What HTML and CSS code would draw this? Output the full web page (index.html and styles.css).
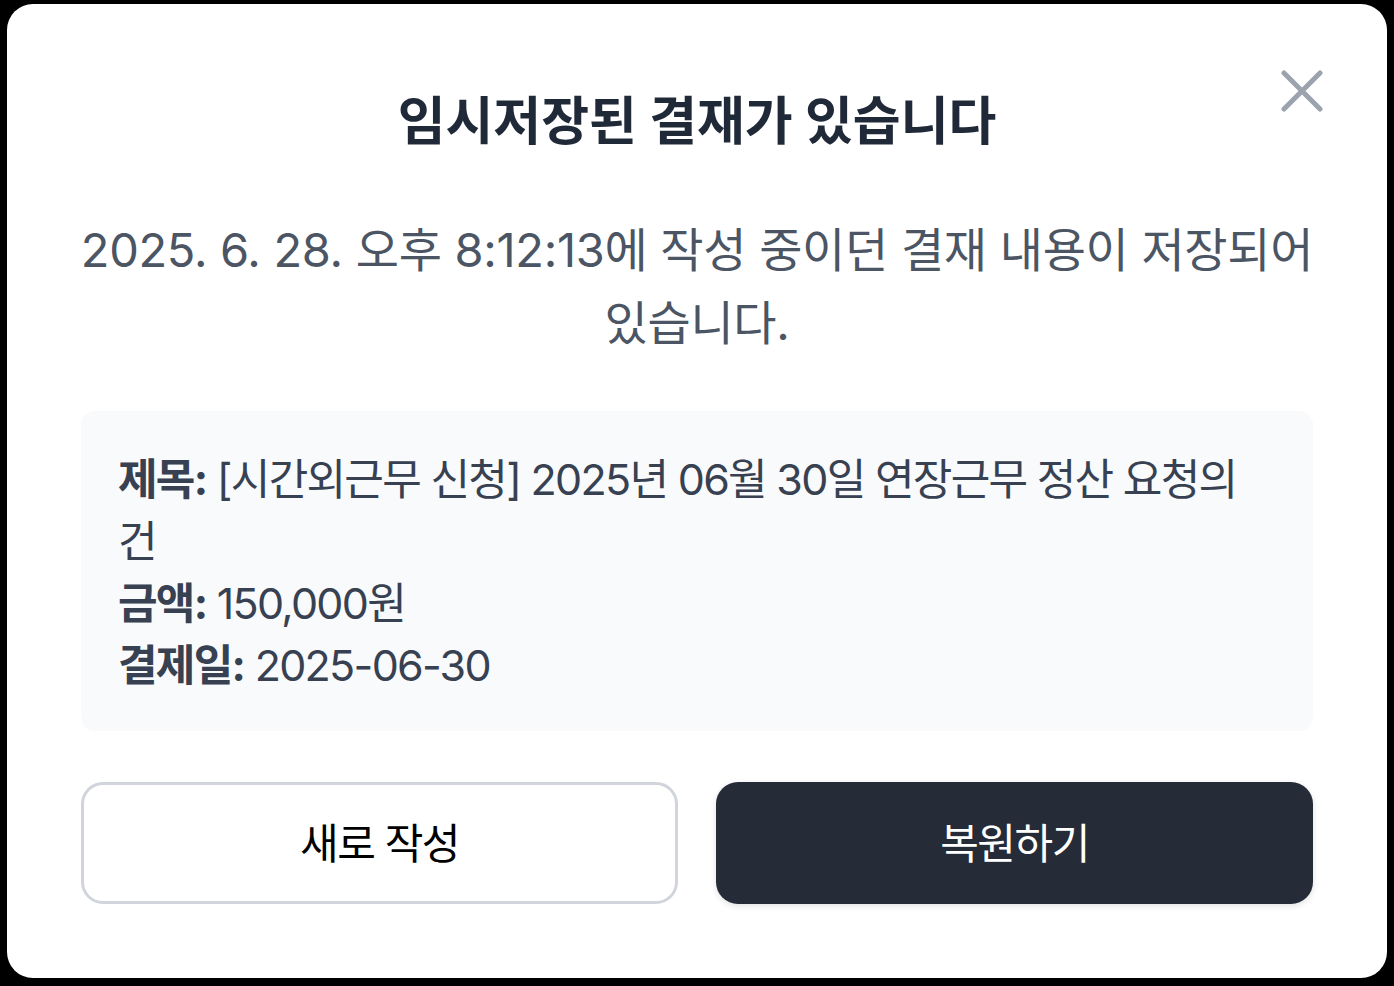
FILE: index.html
```html
<!DOCTYPE html>
<html lang="ko">
<head>
<meta charset="utf-8">
<title>임시저장된 결재</title>
<link rel="stylesheet" href="styles.css">
</head>
<body>
<div class="modal">
  <button class="close" aria-label="닫기">
    <svg width="42" height="42" viewBox="0 0 42 42" fill="none" stroke="#9ca3af" stroke-width="5" stroke-linecap="round"><path d="M3 3L39 39M39 3L3 39"/></svg>
  </button>
  <h1 class="title">임시저장된 결재가 있습니다</h1>
  <p class="desc">2025. 6. 28. 오후 8:12:13에 작성 중이던 결재 내용이 저장되어 있습니다.</p>
  <div class="info">
    <p><span class="label">제목:</span> [시간외근무 신청] 2025년 06월 30일 연장근무 정산 요청의 건</p>
    <p><span class="label">금액:</span> 150,000원</p>
    <p><span class="label">결제일:</span> 2025-06-30</p>
  </div>
  <div class="actions">
    <button class="btn btn-outline">새로 작성</button>
    <button class="btn btn-dark">복원하기</button>
  </div>
</div>
</body>
</html>
```
FILE: styles.css
```css
* { box-sizing: border-box; }
html, body { margin: 0; padding: 0; background: #000; }
body {
  font-family: Inter, "Noto Sans CJK KR", sans-serif;
  width: 1394px;
  height: 986px;
  overflow: hidden;
}
.modal {
  position: relative;
  margin: 4px 7px 0 7px;
  width: 1380px;
  height: 974px;
  background: #fff;
  border-radius: 26px;
  padding: 82px 74px 74px;
  display: flex;
  flex-direction: column;
}
.close {
  position: absolute;
  top: 66px;
  right: 64px;
  width: 42px;
  height: 42px;
  padding: 0;
  border: 0;
  background: none;
  display: flex;
}
.title {
  margin: 0;
  text-align: center;
  font-size: 52px;
  line-height: 72px;
  font-weight: 700;
  color: #1f2937;
  letter-spacing: 0;
}
.desc {
  margin: 55px -12px 0;
  text-align: center;
  font-size: 47px;
  line-height: 73px;
  color: #4b5563;
  letter-spacing: -0.3px;
  word-break: keep-all;
}
.info {
  margin-top: 52px;
  background: #f9fafb;
  border-radius: 14px;
  padding: 37px 36px 35px 37px;
  color: #374151;
  font-size: 43px;
  line-height: 62px;
  letter-spacing: -1.7px;
}
.info p { margin: 0; }
.label { font-weight: 700; }
.actions {
  margin-top: 51px;
  display: grid;
  grid-template-columns: 1fr 1fr;
  gap: 38px;
}
.btn {
  height: 122px;
  border-radius: 22px;
  font-family: Inter, "Noto Sans CJK KR", sans-serif;
  font-size: 42px;
  line-height: 1;
  padding: 2px 0 0;
  letter-spacing: -1.5px;
}
.btn-outline {
  background: #fff;
  border: 3px solid #d1d5db;
  color: #000;
}
.btn-dark {
  background: #262c37;
  border: 0;
  color: #fff;
  box-shadow: 0 2px 6px rgba(0,0,0,0.12);
}
```
